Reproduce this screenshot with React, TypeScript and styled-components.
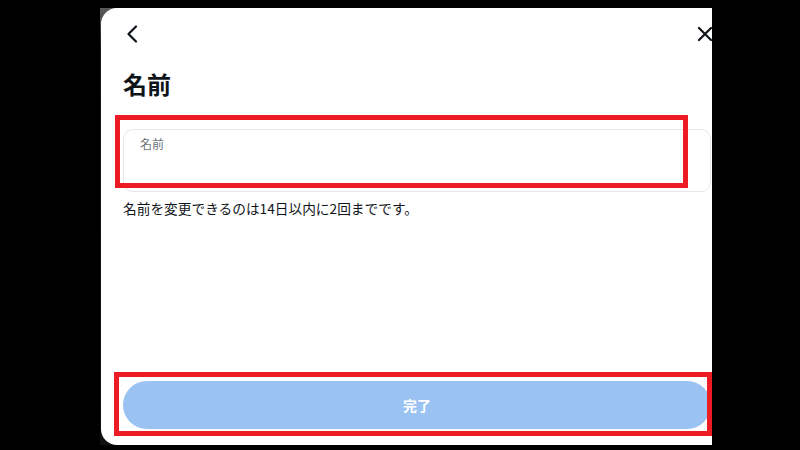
import styled, { createGlobalStyle } from 'styled-components'

const GlobalStyle = createGlobalStyle`
    html, body {
        margin : 0;
        padding : 0;
        background : #000;
    }
    body {
        width : 800px;
        height : 450px;
        overflow : hidden;
        font-family : "Noto Sans CJK JP", "Noto Sans", sans-serif;
        color : #0f1419;
    }
`

const ChevronLeft = () => (
    <svg width="14" height="18" viewBox="0 0 14 18" fill="none">
        <path d="M11 1.5 L3.5 9 L11 16.5" stroke="#0f1419" strokeWidth="2.2" strokeLinecap="round" strokeLinejoin="round" />
    </svg>
)

const CloseIcon = () => (
    <svg width="16" height="16" viewBox="0 0 16 16" fill="none">
        <path d="M2 2 L14 14 M14 2 L2 14" stroke="#0f1419" strokeWidth="2.2" strokeLinecap="round" />
    </svg>
)

export default function App() {
    return (
        <>
            <GlobalStyle />
            <Page>
                <Frame>
                    <Panel>
                        <Header>
                            <IconButton><ChevronLeft /></IconButton>
                            <IconButton $edge><CloseIcon /></IconButton>
                        </Header>

                        <Title>名前</Title>

                        <Field>
                            <FieldLabel>名前</FieldLabel>
                            <Mark $top={-15} $left={-9} $width={573} $height={73} />
                        </Field>

                        <Hint>名前を変更できるのは14日以内に2回までです。</Hint>

                        <Footer>
                            <DoneButton disabled>完了</DoneButton>
                            <Mark $top={-9} $left={-9} $width={598} $height={64} />
                        </Footer>
                    </Panel>
                </Frame>
            </Page>
        </>
    )
}

// styled-component
const Page = styled.div`
    display : flex;
    padding : 8px 0 5px 100px;
    height : 450px;
    box-sizing : border-box;
`

const Frame = styled.div`
    display : flex;
    padding-left : 1px;
    background : linear-gradient(180deg, #5a5a5a 0px, #4a4a4a 14px, #1a1a1a 40px, #111 100%);
`

const Panel = styled.div`
    width : 611px;
    height : 437px;
    background : #fff;
    border-radius : 16px 0 0 16px;
    overflow : hidden;
    display : flex;
    flex-direction : column;
    padding-left : 22px;
    box-sizing : border-box;
`

const Header = styled.div`
    height : 52px;
    display : flex;
    align-items : center;
    justify-content : space-between;
`

const IconButton = styled.div<{ $edge? : boolean }>`
    display : flex;
    align-items : center;
    justify-content : center;
    width : 18px;
    height : 18px;
    margin-right : ${p => p.$edge ? '-2px' : '0'};
`

const Title = styled.h1`
    margin : 8px 0 0;
    font-size : 24px;
    line-height : 32px;
    font-weight : 700;
`

const Field = styled.div`
    position : relative;
    margin-top : 29px;
    width : 588px;
    height : 63px;
    border : 1px solid #e4e7ea;
    border-radius : 10px;
    box-sizing : border-box;
    padding : 6px 16px;
`

const FieldLabel = styled.div`
    font-size : 12px;
    line-height : 16px;
    color : #6b7278;
`

const Hint = styled.p`
    margin : 7px 0 0;
    font-size : 13.7px;
    line-height : 18px;
`

const Footer = styled.div`
    position : relative;
    margin-top : auto;
    margin-bottom : 16px;
    width : 588px;
`

const DoneButton = styled.button`
    display : block;
    width : 100%;
    height : 48px;
    border : none;
    border-radius : 24px;
    background : #9ac2f2;
    color : #fff;
    font-family : inherit;
    font-size : 14px;
    font-weight : 700;
`

const Mark = styled.div<{ $top : number, $left : number, $width : number, $height : number }>`
    position : absolute;
    top : ${p => p.$top}px;
    left : ${p => p.$left}px;
    width : ${p => p.$width}px;
    height : ${p => p.$height}px;
    border : 5px solid #ed1c24;
    box-sizing : border-box;
    pointer-events : none;
`
